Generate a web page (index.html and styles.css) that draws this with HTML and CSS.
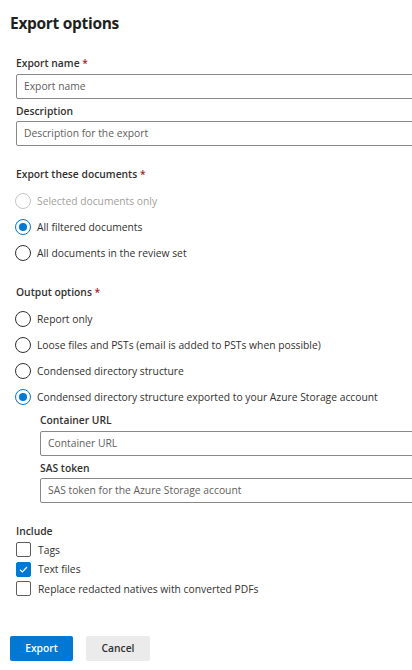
FILE: index.html
```html
<!DOCTYPE html>
<html>
<head>
<meta charset="utf-8">
<link rel="stylesheet" href="styles.css">
</head>
<body>
<div class="panel">
  <h1 class="title">Export options</h1>

  <div class="form">
    <label class="label label-first">Export name <span class="req">*</span></label>
    <div class="input">Export name</div>
    <label class="label label-tight">Description</label>
    <div class="input">Description for the export</div>

    <div class="label section">Export these documents <span class="req">*</span></div>
    <div class="options">
      <div class="radio-row disabled"><span class="radio"></span><span>Selected documents only</span></div>
      <div class="radio-row"><span class="radio checked"></span><span>All filtered documents</span></div>
      <div class="radio-row"><span class="radio"></span><span>All documents in the review set</span></div>
    </div>

    <div class="label section after-options">Output options <span class="req">*</span></div>
    <div class="options">
      <div class="radio-row"><span class="radio"></span><span>Report only</span></div>
      <div class="radio-row"><span class="radio"></span><span>Loose files and PSTs (email is added to PSTs when possible)</span></div>
      <div class="radio-row"><span class="radio"></span><span>Condensed directory structure</span></div>
      <div class="radio-row"><span class="radio checked"></span><span>Condensed directory structure exported to your Azure Storage account</span></div>
    </div>

    <div class="nested">
      <label class="label label-nested">Container URL</label>
      <div class="input">Container URL</div>
      <label class="label label-tight">SAS token</label>
      <div class="input">SAS token for the Azure Storage account</div>
    </div>

    <div class="label section">Include</div>
    <div class="checks">
      <div class="check-row"><span class="box"></span><span>Tags</span></div>
      <div class="check-row"><span class="box checked"><svg width="11" height="11" viewBox="0 0 11 11"><path d="M2 5.8 L4.4 8 L9 3" fill="none" stroke="#fff" stroke-width="1.2"/></svg></span><span>Text files</span></div>
      <div class="check-row"><span class="box"></span><span>Replace redacted natives with converted PDFs</span></div>
    </div>
  </div>

  <div class="actions">
    <button class="btn primary">Export</button>
    <button class="btn secondary">Cancel</button>
  </div>
</div>
</body>
</html>
```

FILE: styles.css
```css
html, body {
  margin: 0;
  padding: 0;
  background: #ffffff;
  overflow: hidden;
}

body {
  width: 412px;
  height: 670px;
  font-family: "Open Sans", "Noto Sans", sans-serif;
  color: #323130;
  font-size: 10.3px;
}

.panel {
  padding: 12px 0 0 10px;
}

.title {
  margin: 0;
  font-size: 15.5px;
  line-height: 22px;
  font-weight: 700;
  letter-spacing: -0.3px;
  color: #201f1e;
}

.form {
  padding-left: 6px;
}

.label {
  display: block;
  font-weight: 600;
  font-size: 10.3px;
  line-height: 18px;
  color: #323130;
}

.label-first {
  margin-top: 20px;
  margin-bottom: 2px;
}

.label-tight {
  margin-top: 3px;
  margin-bottom: 1px;
}

.label-nested {
  margin-top: 1px;
  margin-bottom: 2px;
}

.req {
  color: #a4262c;
}

.input {
  box-sizing: border-box;
  width: 420px;
  height: 25px;
  border: 1px solid #8a8886;
  border-radius: 2px;
  padding: 0 7px;
  line-height: 23px;
  color: #605e5c;
  font-size: 10.3px;
}

.section {
  margin-top: 19px;
}

.section.after-options {
  margin-top: 17px;
}

.options {
  margin-top: 5px;
}

.radio-row {
  display: flex;
  align-items: center;
  gap: 6px;
  height: 26px;
  margin-left: -1px;
}

.radio {
  box-sizing: border-box;
  width: 16px;
  height: 16px;
  border: 1px solid #323130;
  border-radius: 50%;
  display: flex;
  align-items: center;
  justify-content: center;
  flex: none;
}

.radio.checked {
  border-color: #0078d4;
}

.radio.checked::after {
  content: "";
  width: 8px;
  height: 8px;
  border-radius: 50%;
  background: #0078d4;
}

.disabled {
  color: #a19f9d;
}

.disabled .radio {
  border-color: #c8c6c4;
}

.nested {
  padding-left: 24px;
}

.checks {
  margin-top: 0;
}

.check-row {
  display: flex;
  align-items: center;
  gap: 7px;
  height: 19.5px;
}

.box {
  box-sizing: border-box;
  width: 15px;
  height: 15px;
  border: 1px solid #605e5c;
  border-radius: 2px;
  flex: none;
  display: flex;
  align-items: center;
  justify-content: center;
}

.box.checked {
  background: #0078d4;
  border-color: #0078d4;
}

.actions {
  display: flex;
  gap: 13px;
  margin-top: 37px;
}

.btn {
  height: 25px;
  border: none;
  border-radius: 2px;
  font-family: "Open Sans", "Noto Sans", sans-serif;
  font-size: 10.3px;
  font-weight: 600;
  padding: 0;
  cursor: pointer;
}

.primary {
  width: 63px;
  background: #0078d4;
  color: #ffffff;
}

.secondary {
  width: 64px;
  background: #ebebeb;
  color: #323130;
}
```
